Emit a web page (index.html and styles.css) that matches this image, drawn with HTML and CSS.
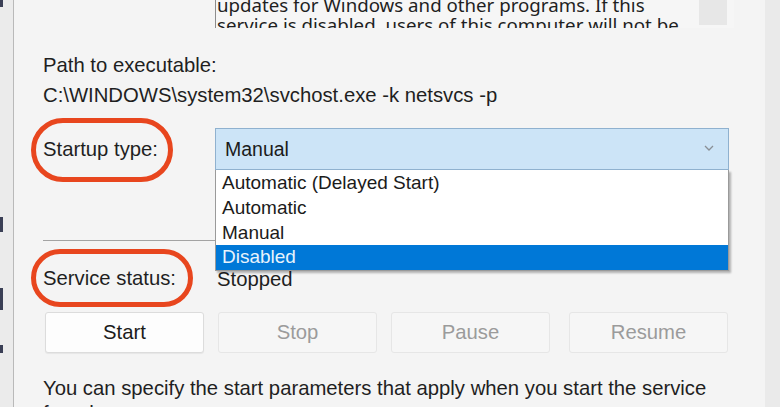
FILE: index.html
```html
<!DOCTYPE html>
<html>
<head>
<meta charset="utf-8">
<link rel="stylesheet" href="styles.css">
</head>
<body>
<div class="screen">
  <div class="behind">
    <span class="mark m1"></span>
    <span class="mark m2"></span>
    <span class="mark m3"></span>
    <span class="mark m4"></span>
  </div>
  <div class="dialog">
    <div class="desc-row">
      <div class="desc">
        <div class="desc-scroll">
          <p>updates for Windows and other programs. If this</p>
          <p>service is disabled, users of this computer will not be</p>
        </div>
        <div class="thumb"></div>
      </div>
    </div>

    <div class="path">
      <div>Path to executable:</div>
      <div>C:\WINDOWS\system32\svchost.exe -k netsvcs -p</div>
    </div>

    <div class="field startup">
      <div class="label">Startup type:</div>
      <div class="combo">
        <div class="select">
          <span>Manual</span>
          <svg class="chev" width="10" height="6" viewBox="0 0 10 6"><path d="M1 1 L5 5 L9 1" fill="none" stroke="#8a8f96" stroke-width="1.3"/></svg>
        </div>
        <ul class="list">
          <li>Automatic (Delayed Start)</li>
          <li>Automatic</li>
          <li>Manual</li>
          <li class="sel">Disabled</li>
        </ul>
      </div>
      <div class="ring ring1"></div>
    </div>

    <div class="sep"></div>

    <div class="field status">
      <div class="label">Service status:</div>
      <div class="value">Stopped</div>
      <div class="ring ring2"></div>
    </div>

    <div class="buttons">
      <button class="btn">Start</button>
      <button class="btn off">Stop</button>
      <button class="btn off">Pause</button>
      <button class="btn off wide-gap">Resume</button>
    </div>

    <p class="note">You can specify the start parameters that apply when you start the service from here.</p>
  </div>
  <div class="edge"></div>
</div>
</body>
</html>
```

FILE: styles.css
```css
* { box-sizing: border-box; }
html, body { margin: 0; padding: 0; }
body {
  width: 780px;
  height: 407px;
  overflow: hidden;
  font-family: "Liberation Sans", Arial, sans-serif;
  color: #1f1f1f;
  background: #f3f3f3;
}
.screen {
  display: flex;
  height: 407px;
}
.behind {
  width: 14px;
  flex: none;
  position: relative;
  background: #ebebeb;
  border-right: 1px solid #b9b9b9;
}
.mark { position: absolute; left: 0; width: 3px; background: #3a3f55; }
.m1 { top: 0; height: 7px; }
.m2 { top: 217px; height: 15px; }
.m3 { top: 288px; height: 22px; }
.m4 { top: 345px; height: 8px; }

.dialog {
  flex: 1;
  background: #f4f4f4;
  padding-left: 29px;
  position: relative;
}
.edge {
  width: 15px;
  flex: none;
  background: #eaeaea;
}

/* description box */
.desc-row { padding-left: 172px; }
.desc {
  width: 519px;
  height: 28px;
  border-left: 1px solid #8c8c8c;
  background: #f6f6f6;
  position: relative;
  overflow: hidden;
  font-family: "Noto Sans", "Liberation Sans", sans-serif;
  font-size: 18.7px;
  line-height: 20px;
}
.desc-scroll { margin-top: -5px; padding-left: 1px; }
.desc p { margin: 0; white-space: nowrap; }
.thumb {
  position: absolute;
  right: 7px;
  top: 0;
  width: 28px;
  height: 25px;
  background: #e7e7e7;
}

.path {
  margin-top: 22px;
  font-size: 20.3px;
  line-height: 30px;
}

.field {
  display: grid;
  grid-template-columns: 172px 514px;
  position: relative;
  font-size: 20.3px;
}
.startup { margin-top: 18px; height: 42px; }
.startup .label { align-self: center; }

.combo { position: relative; }
.select {
  height: 42px;
  background: #cce4f7;
  border: 1px solid #8fb1cf;
  display: flex;
  align-items: center;
  justify-content: space-between;
  padding: 0 14px 0 9px;
  font-size: 19.5px;
  color: #1b1b1b;
}
.chev { margin-top: -2px; }
.list {
  position: absolute;
  left: 0;
  top: 42px;
  width: 514px;
  margin: 0;
  padding: 0;
  list-style: none;
  background: #fff;
  border: 1px solid #9a9a9a;
  border-top: none;
  box-shadow: 2px 2px 2px rgba(0,0,0,0.28);
  z-index: 2;
  font-size: 19px;
}
.list li {
  height: 25px;
  line-height: 25px;
  padding-left: 6px;
  color: #1b1b1b;
}
.list li.sel {
  background: #0078d7;
  color: #e8f3fc;
  height: 25px;
  line-height: 23px;
}

.sep {
  margin-top: 70px;
  height: 1px;
  width: 686px;
  background: #a3a3a3;
}

.status { margin-top: 27px; height: 24px; line-height: 24px; }
.status .label { margin-top: -2px; }
.value { padding-left: 2px; margin-top: -1px; }

.ring {
  position: absolute;
  border: 5px solid #e8461e;
  border-radius: 32px;
}
.ring1 { left: -12px; top: -10px; width: 142px; height: 64px; }
.ring2 { left: -12px; top: -19px; width: 162px; height: 58px; }

.buttons {
  display: flex;
  gap: 14px;
  margin-top: 20px;
  margin-left: 2px;
}
.btn {
  width: 159px;
  height: 41px;
  font-family: "Liberation Sans", Arial, sans-serif;
  font-size: 20.3px;
  color: #1b1b1b;
  background: #fdfdfd;
  border: 1px solid #dcdcdc;
  border-radius: 3px;
  box-shadow: 0 1px 1px rgba(0,0,0,0.06);
  padding: 0;
}
.btn.off {
  color: #9b9b9b;
  background: #f6f6f6;
  border-color: #e6e6e6;
  box-shadow: none;
}
.btn.wide-gap { margin-left: 5px; }

.note {
  margin: 23px 0 0;
  font-size: 20.3px;
  line-height: 25px;
  width: 700px;
}
```
